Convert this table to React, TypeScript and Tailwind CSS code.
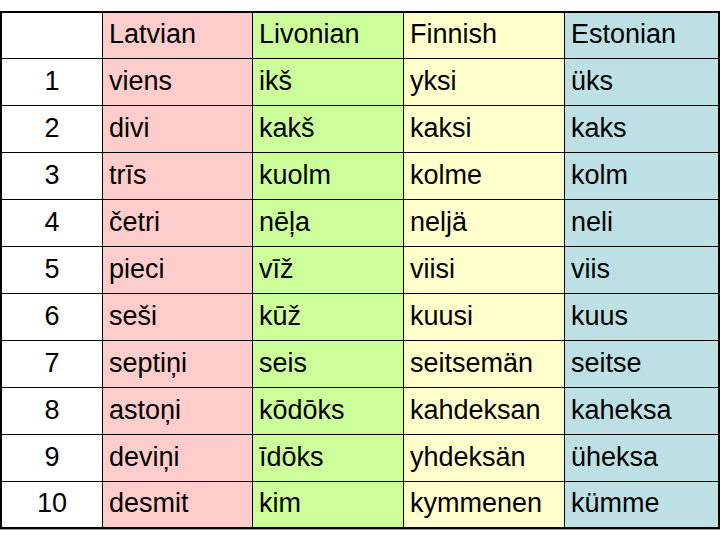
const rows: [string, string, string, string, string][] = [
  ["1", "viens", "ikš", "yksi", "üks"],
  ["2", "divi", "kakš", "kaksi", "kaks"],
  ["3", "trīs", "kuolm", "kolme", "kolm"],
  ["4", "četri", "nēļa", "neljä", "neli"],
  ["5", "pieci", "vīž", "viisi", "viis"],
  ["6", "seši", "kūž", "kuusi", "kuus"],
  ["7", "septiņi", "seis", "seitsemän", "seitse"],
  ["8", "astoņi", "kōdōks", "kahdeksan", "kaheksa"],
  ["9", "deviņi", "īdōks", "yhdeksän", "üheksa"],
  ["10", "desmit", "kim", "kymmenen", "kümme"],
];

function Row({ cells, height, last }: { cells: string[]; height: string; last?: boolean }) {
  const line = last ? "" : "border-b border-black";
  return (
    <div className={`flex ${height} ${line}`}>
      <div className="w-[101px] border-r border-black bg-white flex items-center justify-center pb-[2px]">
        {cells[0]}
      </div>
      <div className="w-[150px] border-r border-black bg-[#ffcccc] flex items-center pl-[6px] pb-[2px]">
        {cells[1]}
      </div>
      <div className="w-[151px] border-r border-black bg-[#ccff99] flex items-center pl-[6px] pb-[2px]">
        {cells[2]}
      </div>
      <div className="w-[161px] border-r border-black bg-[#ffffcc] flex items-center pl-[6px] pb-[2px]">
        {cells[3]}
      </div>
      <div className="flex-1 bg-[#bce0e3] flex items-center pl-[6px] pb-[2px]">{cells[4]}</div>
    </div>
  );
}

export default function App() {
  return (
    <div className="w-[720px] h-[540px] bg-white pt-[11px] font-['Liberation_Sans',Arial,sans-serif] text-[27px] text-black leading-none">
      <div className="w-[720px] border-2 border-black shadow-[0_1px_0_#9a9a9a]">
        <Row cells={["", "Latvian", "Livonian", "Finnish", "Estonian"]} height="h-[46px]" />
        {rows.map((r, i) => (
          <Row
            key={r[0]}
            cells={r}
            height={i === rows.length - 1 ? "h-[45px]" : "h-[47px]"}
            last={i === rows.length - 1}
          />
        ))}
      </div>
    </div>
  );
}
